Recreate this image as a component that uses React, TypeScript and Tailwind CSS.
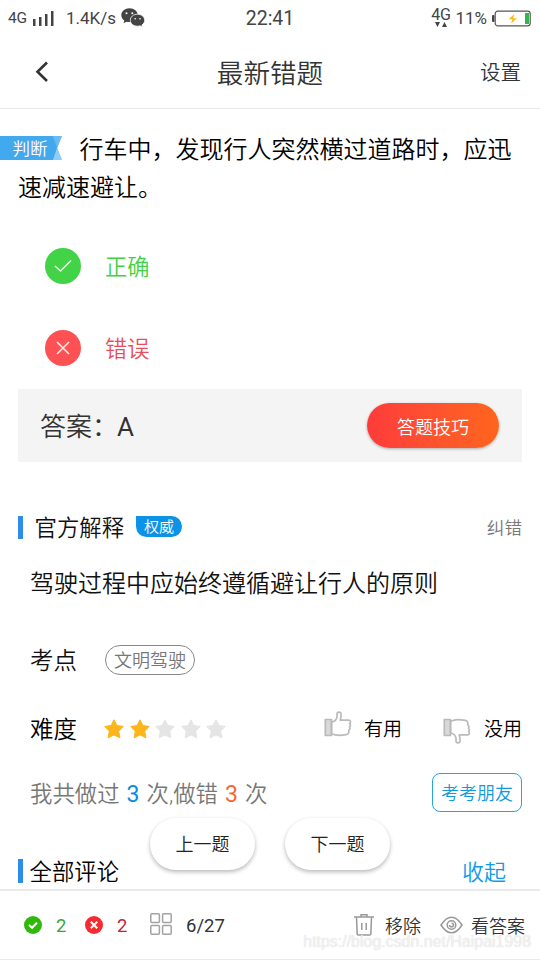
import React from 'react';

const ThumbIcon: React.FC<{ className?: string }> = ({ className }) => (
  <svg className={className} width="28" height="28" viewBox="0 0 28 28" fill="none" stroke="#bababa" strokeWidth="1.7" strokeLinejoin="round">
    <rect x="1.300" y="9.500" width="6.200" height="16" fill="#d9d9d9" />
    <path d="M7.500 12c3-.5 5-2 5.500-5.200V4c.2-2.600 3.800-2.600 4 0 .3 2.300-.2 4.300-.8 6.100h8.300c2.200 0 2.500 2.600 1 3.400 1.300 1 1.200 2.600 0 3.400.8 1.100.5 2.500-.7 3.100.5 2.600-.6 4.300-2.500 4.600-3.300.6-8.800.9-11.200.3-1.200-.3-2-.9-3.600-.9z" />
  </svg>
);

const Star: React.FC<{ filled: boolean }> = ({ filled }) => (
  <svg width="20" height="20" viewBox="0 0 20 20" fill={filled ? '#fdb51c' : '#e5e5e5'} stroke={filled ? '#fdb51c' : '#e5e5e5'} strokeWidth="1" strokeLinejoin="round">
    <path d="M10 .8l2.900 5.700 6.400.9-4.600 4.700 1.200 6.700L10 15.900l-5.900 2.900 1.200-6.700L.7 7.400l6.400-.9z" />
  </svg>
);

const StatusBar: React.FC = () => (
  <div className="grid h-9 grid-cols-3 items-center pt-0.5 text-[#444]">
    <div className="flex items-center pl-2">
      <span className="w-[25px] text-[15.500px] tracking-[-0.3px]">4G</span>
      <svg width="22" height="16" viewBox="0 0 22 16" fill="#444">
        <rect x="0" y="8" width="2.500" height="7" />
        <rect x="6" y="6" width="2.500" height="9" />
        <rect x="12" y="3" width="2.500" height="12" />
        <rect x="18" y="0" width="2.500" height="15" />
      </svg>
      <span className="ml-[11px] w-[54px] text-[17px] whitespace-nowrap">1.4K/s</span>
      <svg className="-mt-0.5 ml-px" width="24" height="20" viewBox="0 0 24 20" fill="#444">
        <path d="M8.500.3C3.900.3.300 3.400.300 7.300c0 2.200 1.200 4 3 5.300l-.8 2.600 3-1.500c1 .3 2 .4 3 .4 4.600 0 8.300-3 8.300-6.900S13.100.300 8.500.300z" />
        <path d="M16.500 6.200c-4 0-7.200 2.600-7.200 6s3.200 6 7.200 6c.9 0 1.700-.1 2.500-.4l2.500 1.500-.6-2.300c1.700-1.100 2.800-2.800 2.800-4.800 0-3.400-3.200-6-7.200-6z" stroke="#fff" strokeWidth=".8" />
        <g fill="#fff">
          <circle cx="5.500" cy="5.200" r="1" />
          <circle cx="11.300" cy="5.200" r="1" />
          <circle cx="14.200" cy="10.700" r=".8" />
          <circle cx="19" cy="10.700" r=".8" />
        </g>
      </svg>
    </div>
    <div className="text-center text-[19.500px]">22:41</div>
    <div className="flex items-center justify-end pr-[9px]">
      <div className="-mt-1 flex flex-col items-center">
        <span className="text-[16px] leading-[15px] tracking-[-0.4px]">4G</span>
        <svg width="12" height="5" viewBox="0 0 12 5" fill="#444">
          <path d="M0 0h5L2.500 5zM7 5h5L9.500 0z" />
        </svg>
      </div>
      <span className="ml-[5px] text-[17px]">11%</span>
      <svg className="ml-[5px]" width="39" height="17" viewBox="0 0 39 17">
        <rect x="0" y="5" width="2.500" height="7" rx="1" fill="#444" />
        <rect x="3.200" y="1.200" width="35" height="14.600" rx="2.500" fill="none" stroke="#555" strokeWidth="1.200" />
        <rect x="33" y="3" width="4" height="11" fill="#33b74a" />
        <path d="M22.500 4l-6 5.300h4L19 13.500l6-5.300h-4z" fill="#fdb913" />
      </svg>
    </div>
  </div>
);

const Header: React.FC = () => (
  <div className="relative flex h-[73px] items-center justify-center border-b border-[#e8e8e8] text-[#333]">
    <svg className="absolute top-[25px] left-[34px]" width="15" height="22" viewBox="0 0 15 22" fill="none" stroke="#333" strokeWidth="2.600">
      <path d="M13 1.500L3.500 10.800 13 20" />
    </svg>
    <h1 className="pt-[5px] text-[26.600px] leading-[36px] font-[350]">最新错题</h1>
    <span className="absolute right-[19px] pt-1 text-[20.500px] font-[350]">设置</span>
  </div>
);

const Option: React.FC<{ correct?: boolean; label: string }> = ({ correct, label }) => (
  <div className="flex h-[82px] items-center pl-[45px]">
    <div className={`flex h-9 w-9 items-center justify-center rounded-full ${correct ? 'bg-[#43d347]' : 'bg-[#fd5153]'}`}>
      <svg width="20" height="20" viewBox="0 0 20 20" fill="none" stroke="#fff" strokeOpacity=".9" strokeWidth="1.500">
        <path d={correct ? 'M2 10l5.500 5L18 4.500' : 'M4 4l12 12M16 4L4 16'} />
      </svg>
    </div>
    <span className={`ml-6 pt-1 text-[22.200px] font-[350] ${correct ? 'text-[#41d145]' : 'text-[#e94e5c]'}`}>{label}</span>
  </div>
);

const BottomBar: React.FC = () => (
  <div className="relative flex h-[71px] items-center border-t-2 border-b border-[#eaeaea] bg-white pr-[15px] pl-6 text-[18px] text-[#333]">
    <svg width="18" height="18" viewBox="0 0 18 18">
      <circle cx="9" cy="9" r="9" fill="#2fb90b" />
      <path d="M5 9l3 2.800 5-5" stroke="#fff" strokeWidth="2" fill="none" />
    </svg>
    <span className="ml-[14px] w-[29px] pt-[3px] text-[18.500px] text-[#3ca42e]">2</span>
    <svg width="18" height="18" viewBox="0 0 18 18">
      <circle cx="9" cy="9" r="9" fill="#f62b31" />
      <path d="M5.800 5.800l6.400 6.400M12.200 5.800l-6.400 6.400" stroke="#fff" strokeWidth="2" />
    </svg>
    <span className="ml-[14px] w-[33px] pt-[3px] text-[18.500px] text-[#c9213b]">2</span>
    <svg className="-mt-0.5" width="22" height="22" viewBox="0 0 22 22" fill="none" stroke="#a3a3a3" strokeWidth="1.500">
      <rect x=".8" y=".8" width="8.600" height="8.600" rx="1" />
      <rect x="12.600" y=".8" width="8.600" height="8.600" rx="1" />
      <rect x=".8" y="12.600" width="8.600" height="8.600" rx="1" />
      <rect x="12.600" y="12.600" width="8.600" height="8.600" rx="1" />
    </svg>
    <span className="ml-[14px] pt-[3px] text-[18.500px]">6/27</span>
    <div className="ml-auto flex items-center">
      <svg width="20" height="22" viewBox="0 0 20 22" fill="none" stroke="#999" strokeWidth="1.500">
        <path d="M0 3h20M7 2.500V.800h6v1.700M2.500 3.500l.7 16.500q.1 1 1.100 1h11.400q1 0 1.100-1l.7-16.500M7.800 9v7M12.200 9v7" />
      </svg>
      <span className="ml-[11px] pt-[3px] font-[350]">移除</span>
      <svg className="ml-[19px]" width="23" height="18" viewBox="0 0 23 18" fill="none" stroke="#999" strokeWidth="1.500">
        <path d="M1 9Q6 1.200 11.500 1.200T22 9Q17 16.800 11.500 16.800T1 9z" />
        <circle cx="11.500" cy="9" r="4.300" />
        <path d="M11.500 7.200q2 0 2 1.800t-2 1.800-2-1.800" />
      </svg>
      <span className="ml-2 pt-[3px] font-[350]">看答案</span>
    </div>
    <span className="absolute right-[9px] bottom-[7px] font-['Liberation_Sans'] text-[15.950px] leading-5 text-white/70 [text-shadow:0_0_1px_#ccc]">
      https://blog.csdn.net/Haipai1998
    </span>
  </div>
);

export default function App() {
  return (
    <div className="flex h-[960px] w-[540px] flex-col overflow-hidden bg-white font-['Roboto','Noto_Sans_CJK_SC',sans-serif] text-[#111]">
      <StatusBar />
      <Header />

      {/* Question */}
      <div className="relative mt-[22px] h-[76px] pl-[18px] text-black">
        <div className="absolute top-[5px] left-0 h-6 w-[62px]">
          <svg className="absolute inset-0" width="62" height="24" viewBox="0 0 62 24">
            <path d="M0 0h62l-5 12 5 12H0z" fill="#7fc6f7" />
            <path d="M0 0h53l6 6-2 6 2 6-6 6H0z" fill="#42a9ef" />
            <path d="M53 0h9l-5 12z" fill="#69bbf5" />
            <path d="M53 24h9l-5-12z" fill="#8dcdf9" />
          </svg>
          <span className="absolute left-[12.500px] text-[17.600px] leading-[27px] font-[350] text-white">判断</span>
        </div>
        <p className="indent-[61.500px] text-[24px] leading-[38px] font-[350] whitespace-nowrap">
          行车中，发现行人突然横过道路时，应迅
        </p>
        <p className="text-[24px] leading-[38px] font-[350]">速减速避让。</p>
      </div>

      {/* Options */}
      <div className="mt-[18px]">
        <Option correct label="正确" />
        <Option label="错误" />
      </div>

      {/* Answer */}
      <div className="mx-[18px] flex h-[74px] items-center justify-between bg-[#f4f4f4] pr-[23px] pl-[22px]">
        <span className="pt-1 text-[26px] font-[350] text-[#333]">
          答案：<span className="-ml-px font-normal">A</span>
        </span>
        <button className="h-[45px] w-[132px] rounded-full bg-gradient-to-r from-[#fe3b3a] to-[#ff651c] pt-[3px] text-[18px] font-[350] text-white shadow-[0_1px_3px_rgba(0,0,0,0.3)]">
          答题技巧
        </button>
      </div>

      {/* Explanation */}
      <div className="mt-[49px] flex h-8 items-center pr-[18px] pl-[18px]">
        <div className="h-[23px] w-[4.500px] bg-[#2d8cec]" />
        <span className="ml-3 pt-[3px] text-[22.400px] font-[350]">官方解释</span>
        <span className="-mt-0.5 ml-3 flex h-[21px] w-[46px] items-center justify-center rounded-full rounded-tl-none bg-[#0e92e6] pt-px text-[15px] font-[350] text-white">权威</span>
        <span className="ml-auto pt-0.5 text-[17.600px] font-[350] text-[#777]">纠错</span>
      </div>
      <p className="mt-[22px] ml-[30px] text-[24px] leading-[38px] font-[350]">驾驶过程中应始终遵循避让行人的原则</p>

      <div className="mt-[37px] flex h-10 items-center pl-[30px]">
        <span className="pt-0.5 text-[23.500px] font-[350]">考点</span>
        <span className="-mt-px ml-7 flex h-[30px] w-[90px] items-center justify-center rounded-full border-[1.500px] border-[#888] pt-0.5 text-[18px] font-[350] text-[#777]">文明驾驶</span>
      </div>

      <div className="mt-7 flex h-10 items-center pr-[18px] pl-[30px]">
        <span className="pt-1 text-[23.500px] font-[350] text-black">难度</span>
        <div className="ml-[27px] flex gap-[5.500px] pt-px">
          {[1, 2, 3, 4, 5].map((n) => (
            <Star key={n} filled={n <= 2} />
          ))}
        </div>
        <div className="ml-auto flex items-center text-[19px] font-[350] text-black">
          <ThumbIcon className="-mt-2" />
          <span className="mr-[41px] ml-3 pt-1">有用</span>
          <ThumbIcon className="mt-1.5 -scale-y-100" />
          <span className="ml-[13px] pt-1">没用</span>
        </div>
      </div>

      <div className="mt-6 flex h-10 items-center justify-between pr-[18px] pl-[30px]">
        <span className="pt-[6px] text-[22.400px] font-[350] text-[#777]">
          我共做过<b className="mx-[7px] text-[23px] font-normal text-[#1089dc]">3</b>次,做错<b className="mx-[7px] text-[23px] font-normal text-[#ef6b35]">3</b>次
        </span>
        <button className="h-[39px] w-[90px] rounded-[8px] border-[1.500px] border-[#26a5df] pt-[3px] text-[18px] font-[350] text-[#1299dd]">考考朋友</button>
      </div>

      <div className="relative mt-[42px] flex h-[35px] items-center pr-[34px] pl-[18px]">
        <div className="-mt-0.5 h-6 w-[4.500px] bg-[#2d8cec]" />
        <span className="ml-[7px] pt-0.5 text-[22.400px] font-[350] text-black">全部评论</span>
        <span className="ml-auto pt-px text-[22px] font-[350] text-[#109be8]">收起</span>
        <div className="absolute -top-[36px] left-[150px] flex gap-[30px]">
          {['上一题', '下一题'].map((label) => (
            <button key={label} className="h-[52px] w-[105px] rounded-full bg-white pt-px text-[18px] font-[350] text-[#222] shadow-[0_2px_4px_rgba(0,0,0,0.28)]">
              {label}
            </button>
          ))}
        </div>
      </div>

      <BottomBar />
    </div>
  );
}
